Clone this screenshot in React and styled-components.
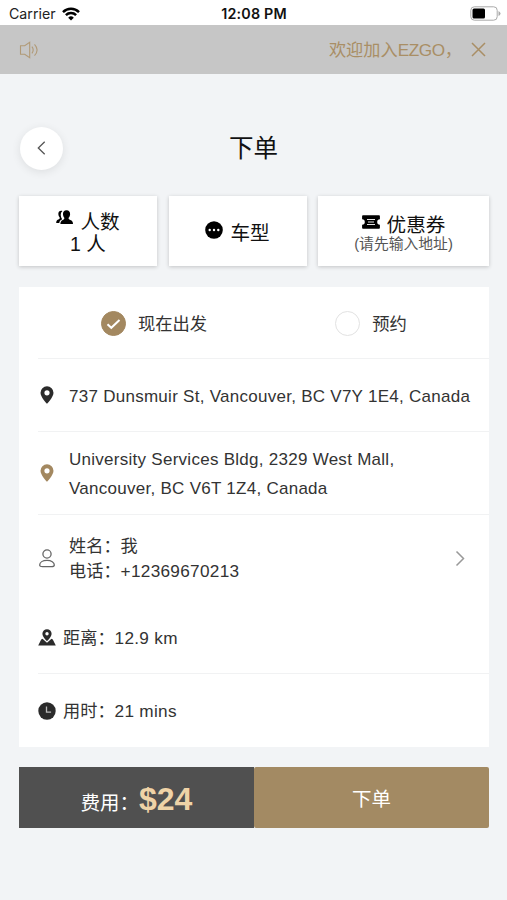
import React, { useState } from 'react';
import styled, { createGlobalStyle } from 'styled-components';

const GlobalStyle = createGlobalStyle`
  * {
    box-sizing: border-box;
  }

  body {
    margin: 0;
    background: #f2f4f6;
    font-family: 'Liberation Sans', 'Noto Sans CJK SC', sans-serif;
    color: #333;
  }

  button {
    font-family: inherit;
    border: none;
    padding: 0;
    cursor: pointer;
  }
`;

const Screen = styled.div`
  width: 507px;
  height: 900px;
  background: #f2f4f6;
  overflow: hidden;
`;

const StatusBar = styled.div`
  display: grid;
  grid-template-columns: 1fr auto 1fr;
  align-items: center;
  height: 25px;
  padding: 2px 6px 0 9px;
  background: #fff;
  font-family: Inter, sans-serif;
  font-size: 14.2px;
  color: #222;
`;

const Carrier = styled.div`
  display: flex;
  align-items: center;
  gap: 6px;
`;

const Time = styled.div`
  margin-right: 2px;
  font-size: 14.3px;
  font-weight: 600;
  letter-spacing: 0.2px;
  color: #111;
`;

const BatteryIcon = styled.svg`
  justify-self: end;
`;

const Notice = styled.div`
  display: flex;
  align-items: center;
  height: 49px;
  padding: 0 21px 0 19px;
  background: #c6c6c6;
  color: #a98e65;
`;

const NoticeText = styled.div`
  flex: 1;
  padding-right: 9px;
  text-align: right;
  font-size: 17.2px;
  line-height: 24px;
`;

const Brand = styled.span`
  letter-spacing: -0.4px;
`;

const Header = styled.header`
  display: grid;
  grid-template-columns: 42px 1fr 42px;
  align-items: center;
  height: 122px;
  padding: 26px 20px 0 20px;
`;

const BackButton = styled.button`
  display: flex;
  align-items: center;
  justify-content: center;
  width: 43px;
  height: 43px;
  border-radius: 50%;
  background: #fff;
  box-shadow: 0 2px 10px rgba(0, 0, 0, 0.09);
`;

const Title = styled.h1`
  margin: 0;
  padding-top: 2px;
  font-size: 24.5px;
  font-weight: 400;
  line-height: 36px;
  text-align: center;
  color: #111;
`;

const Options = styled.div`
  display: grid;
  grid-template-columns: 138px 138px 171px;
  gap: 11.5px;
  padding: 0 18px 0 19px;
`;

const OptionCard = styled.button`
  display: flex;
  flex-direction: column;
  align-items: center;
  justify-content: center;
  height: 70px;
  padding-top: ${(props) => props.$offset || 0}px;
  background: #fff;
  box-shadow: 0 1px 4px rgba(0, 0, 0, 0.2);
  color: #111;
`;

const OptionLabel = styled.div`
  display: flex;
  align-items: center;
  gap: 7px;
  font-size: 19.6px;
  line-height: 22px;

  svg {
    margin-top: ${(props) => props.$iconShift || -6}px;
  }
`;

const OptionValue = styled.div`
  font-size: 19.5px;
  line-height: 22px;
`;

const OptionHint = styled.div`
  font-size: 14.8px;
  line-height: 17px;
  color: #555;
`;

const Panel = styled.section`
  height: 460px;
  margin: 21px 18px 0 19px;
  padding-left: 19px;
  background: #fff;
`;

const Row = styled.div`
  display: flex;
  align-items: center;
  height: ${(props) => props.$height}px;
  padding-right: 23px;
  border-bottom: ${(props) => (props.$line ? '1px solid #f1f2f3' : 'none')};
  font-size: 17.2px;
`;

const IconBox = styled.div`
  display: flex;
  justify-content: center;
  flex: none;
  width: 18px;
  margin-right: ${(props) => props.$gap || 13}px;
`;

const RadioGroup = styled(Row)`
  padding-left: 63px;
  padding-top: 2px;
  gap: 128px;
`;

const Radio = styled.button`
  display: flex;
  align-items: center;
  gap: 12px;
  background: none;
  font-size: 17.3px;
  line-height: 26px;
  color: #333;
`;

const Dot = styled.span`
  display: flex;
  align-items: center;
  justify-content: center;
  width: 25px;
  height: 25px;
  border-radius: 50%;
  border: 1px solid ${(props) => (props.$checked ? '#a38860' : '#e2e2e2')};
  background: ${(props) => (props.$checked ? '#a38860' : '#fff')};
`;

const Address = styled.div`
  flex: 1;
  padding-top: 2px;
  white-space: nowrap;
  font-size: 17px;
  line-height: 29px;
  letter-spacing: 0.27px;
`;

const Contact = styled.div`
  flex: 1;
  padding-top: 1px;
  line-height: 25px;
`;

const Digits = styled.span`
  letter-spacing: 0.3px;
`;

const Metric = styled.div`
  padding-bottom: 2px;
`;

const Footer = styled.footer`
  display: grid;
  grid-template-columns: 1fr 1fr;
  height: 61px;
  margin: 20px 18px 0 19px;
`;

const Fee = styled.div`
  display: flex;
  align-items: baseline;
  justify-content: center;
  padding-top: 13px;
  background: #505050;
  color: #fff;
  font-size: 19.4px;
`;

const Price = styled.strong`
  font-size: 32px;
  line-height: 38px;
  color: #efd3a7;
`;

const SubmitButton = styled.button`
  background: #a38a63;
  border-radius: 2px;
  color: #fff;
  font-size: 19.5px;
`;

const WifiIcon = () => (
  <svg width="18" height="14" viewBox="0 0 18 14" fill="none" stroke="#000" strokeWidth="2.5">
    <path d="M1 5.1a11.4 11.4 0 0 1 16 0" />
    <path d="M3.9 8.2a7.2 7.2 0 0 1 10.2 0" />
    <path d="M9 13.6 6.2 10.7a4 4 0 0 1 5.6 0z" fill="#000" stroke="none" />
  </svg>
);

const SpeakerIcon = () => (
  <svg width="20" height="18" viewBox="0 0 20 18" fill="none" stroke="#b19a77" strokeWidth="1.1">
    <path d="M1.5 4.7h4.2l5-3.4v15.400l-5-3.400H1.5z" />
    <path d="M12.9 5.6q2.6 3.4 0 6.8M15.5 3.4q5.2 5.6 0 11.2" />
  </svg>
);

const PeopleIcon = () => (
  <svg width="17" height="15" viewBox="0 0 17 15">
    <path d="M5.8.8C3.4.5 2 2.2 2.4 4.6c.2 1.4.6 2 1.3 2.800.2 1.200-.2 1.500-1.500 2.100C.8 10.200.2 11 .2 13h3.100c.2-2 1-2.900 2.900-3.800-1.600-2.500-2.300-6 .2-8.200z" />
    <path d="M10.600.2C8 .2 6.700 2 7 4.500c.2 1.600.7 2.500 1.300 3.300.2 1.300-.2 1.500-1.400 2.100-1.700.7-2.500 1.700-2.500 4.100H17c0-2.400-.8-3.400-2.700-4.100-1.500-.6-1.900-.9-1.700-2.100.8-.8 1.300-1.700 1.500-3.300.3-2.500-1.200-4.300-3.500-4.300z" />
  </svg>
);

const MoreIcon = () => (
  <svg width="18" height="18" viewBox="0 0 18 18">
    <circle cx="9" cy="9" r="8.8" />
    <g fill="#fff">
      <circle cx="4.7" cy="9" r="1.2" />
      <circle cx="9" cy="9" r="1.2" />
      <circle cx="13.3" cy="9" r="1.2" />
    </g>
  </svg>
);

const TicketIcon = () => (
  <svg width="18" height="14" viewBox="0 0 18 14">
    <path d="M1 .3h16q.9 0 .9 1v3a2.700 2.700 0 0 0 0 5.400v3q0 1-.9 1H1q-.9 0-.9-1v-3a2.700 2.700 0 0 0 0-5.400v-3q0-1 .9-1z" />
    <path d="M5 4.500h8M6 7h6M5 9.500h8" stroke="#fff" strokeWidth="0.900" />
  </svg>
);

const PinIcon = ({ color }) => (
  <svg width="14" height="18" viewBox="0 0 14 18" fill={color}>
    <path
      fillRule="evenodd"
      d="M7 .3a6.500 6.500 0 0 0-6.500 6.500c0 4.500 6.500 11 6.500 11s6.500-6.500 6.500-11A6.500 6.500 0 0 0 7 .3zm0 3.900a2.600 2.600 0 1 1 0 5.200 2.600 2.600 0 0 1 0-5.200z"
    />
  </svg>
);

const UserIcon = () => (
  <svg width="16" height="19" viewBox="0 0 16 19" fill="none" stroke="#666" strokeWidth="1.3">
    <circle cx="8" cy="5" r="4.1" />
    <path d="M3.500 17.700c-1.900 0-2.800-.5-2.800-1.700 0-2.600 2.900-4.600 7.300-4.600s7.300 2 7.300 4.600c0 1.200-.9 1.700-2.800 1.700z" />
  </svg>
);

const DistanceIcon = () => (
  <svg width="18" height="17" viewBox="0 0 18 17" fill="#2b2b2b">
    <path
      fillRule="evenodd"
      d="M9 .2a4.600 4.600 0 0 0-4.600 4.600C4.400 8 9 12.300 9 12.300S13.600 8 13.600 4.800A4.600 4.600 0 0 0 9 .2zm0 2.900a1.700 1.700 0 1 1 0 3.400 1.700 1.700 0 0 1 0-3.400z"
    />
    <path d="M4.500 9.800 9 13.700l4.500-3.900 1.300.8 3 5.900H.2l3-5.900z" />
  </svg>
);

const ClockIcon = () => (
  <svg width="18" height="18" viewBox="0 0 18 18">
    <circle cx="9" cy="9" r="8.700" fill="#2b2b2b" />
    <path d="M8.500 4.600v5.600h4.600" fill="none" stroke="#bbb" strokeWidth="1.3" />
  </svg>
);

export default function App() {
  const [mode, setMode] = useState('now');

  const modes = [
    { key: 'now', label: '现在出发' },
    { key: 'later', label: '预约' },
  ];

  return (
    <>
      <GlobalStyle />
      <Screen lang="zh-CN">
        <StatusBar>
          <Carrier>
            Carrier
            <WifiIcon />
          </Carrier>
          <Time>12:08 PM</Time>
          <BatteryIcon width="31" height="15" viewBox="0 0 31 15">
            <rect x="0.8" y="0.8" width="26.4" height="13.4" rx="3.5" fill="#fff" stroke="#aaa" />
            <rect x="2.5" y="2.5" width="12.5" height="10" rx="1.5" />
            <path d="M28.5 5v5q2-1 2-2.5t-2-2.5z" fill="#aaa" />
          </BatteryIcon>
        </StatusBar>

        <Notice>
          <SpeakerIcon />
          <NoticeText>
            欢迎加入<Brand>EZGO</Brand>，
          </NoticeText>
          <svg width="15" height="15" viewBox="0 0 15 15" stroke="#a98e65" strokeWidth="1.5">
            <path d="M1 1l13 13M14 1L1 14" />
          </svg>
        </Notice>

        <Header>
          <BackButton>
            <svg width="9" height="14" viewBox="0 0 9 14" fill="none" stroke="#555" strokeWidth="1.3">
              <path d="M7.700.8 1.300 7l6.400 6.200" />
            </svg>
          </BackButton>
          <Title>下单</Title>
        </Header>

        <Options>
          <OptionCard $offset={3}>
            <OptionLabel $iconShift={-8}>
              <PeopleIcon />
              人数
            </OptionLabel>
            <OptionValue>1 人</OptionValue>
          </OptionCard>
          <OptionCard $offset={3}>
            <OptionLabel>
              <MoreIcon />
              车型
            </OptionLabel>
          </OptionCard>
          <OptionCard $offset={4}>
            <OptionLabel $iconShift={-6}>
              <TicketIcon />
              优惠券
            </OptionLabel>
            <OptionHint>(请先输入地址)</OptionHint>
          </OptionCard>
        </Options>

        <Panel>
          <RadioGroup $height={72} $line>
            {modes.map((item) => (
              <Radio key={item.key} onClick={() => setMode(item.key)}>
                <Dot $checked={mode === item.key}>
                  {mode === item.key && (
                    <svg width="15" height="12" viewBox="0 0 15 12" fill="none" stroke="#fff" strokeWidth="2">
                      <path d="M1.500 6.200 5.300 9.800 13.500 2" />
                    </svg>
                  )}
                </Dot>
                {item.label}
              </Radio>
            ))}
          </RadioGroup>

          <Row $height={73} $line>
            <IconBox>
              <PinIcon color="#2b2b2b" />
            </IconBox>
            <Address>737 Dunsmuir St, Vancouver, BC V7Y 1E4, Canada</Address>
          </Row>

          <Row $height={83} $line>
            <IconBox>
              <PinIcon color="#a38860" />
            </IconBox>
            <Address>
              University Services Bldg, 2329 West Mall,
              <br />
              Vancouver, BC V6T 1Z4, Canada
            </Address>
          </Row>

          <Row $height={86}>
            <IconBox>
              <UserIcon />
            </IconBox>
            <Contact>
              姓名：我
              <br />
              电话：<Digits>+12369670213</Digits>
            </Contact>
            <svg width="14" height="17" viewBox="0 0 14 17" fill="none" stroke="#999" strokeWidth="1.5">
              <path d="M4.500 1.500l7 7-7 7" />
            </svg>
          </Row>

          <Row $height={73} $line>
            <IconBox $gap={7}>
              <DistanceIcon />
            </IconBox>
            <Metric>
              距离：<Digits>12.9 km</Digits>
            </Metric>
          </Row>

          <Row $height={73}>
            <IconBox $gap={7}>
              <ClockIcon />
            </IconBox>
            <Metric>
              用时：<Digits>21 mins</Digits>
            </Metric>
          </Row>
        </Panel>

        <Footer>
          <Fee>
            费用：<Price>$24</Price>
          </Fee>
          <SubmitButton>下单</SubmitButton>
        </Footer>
      </Screen>
    </>
  );
}
